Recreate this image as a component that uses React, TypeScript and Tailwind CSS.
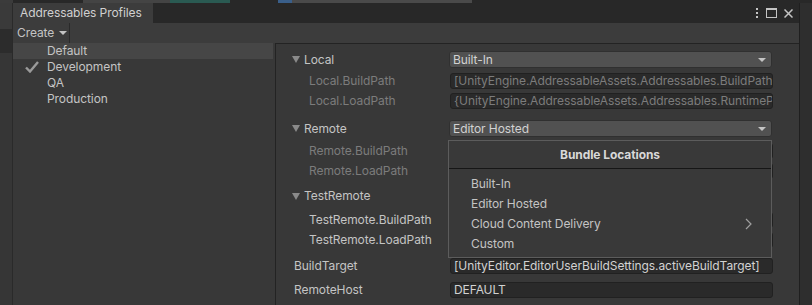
import React from 'react';

const FoldArrow = () => (
  <svg width="8" height="7" viewBox="0 0 8 7" className="shrink-0">
    <path d="M0 0H8L4 7Z" fill="#8a8a8a" />
  </svg>
);

const DropArrow = () => (
  <svg width="8" height="4" viewBox="0 0 8 4" className="shrink-0">
    <path d="M0 0H8L4 4Z" fill="#c4c4c4" />
  </svg>
);

const Dropdown = ({ value }: { value: string }) => (
  <div className="w-[323px] h-[17px] flex items-center justify-between pl-[3px] pr-[5px] rounded-[3px] bg-[#515151] border border-[#303030] text-[#d2d2d2]">
    <span className="leading-none">{value}</span>
    <DropArrow />
  </div>
);

const Field = ({ value, dim }: { value?: string; dim?: boolean }) => (
  <div
    className={
      dim
        ? 'w-[323px] h-[16px] flex items-center pl-[3px] rounded-[3px] bg-[#2a2a2a] border border-[#212121] text-[#7c7c7c] overflow-hidden whitespace-nowrap'
        : 'w-[323px] h-[16px] flex items-center pl-[3px] rounded-[3px] bg-[#2a2a2a] border border-[#212121] text-[#d2d2d2] overflow-hidden whitespace-nowrap'
    }
  >
    {value && <span className="leading-none">{value}</span>}
  </div>
);

export default function App() {
  return (
    <div className="w-[812px] h-[305px] overflow-hidden bg-[#282828] font-['Inter',sans-serif] text-[12px] tracking-[-0.08px] text-[#c4c4c4] flex flex-col">
      {/* sliver of the window above */}
      <div className="h-[3px] flex shrink-0">
        <div className="w-[13px] bg-[#3b3b3b]" />
        <div className="w-[70px] bg-[#282828]" />
        <div className="w-[87px] bg-[#444444]" />
        <div className="w-[60px] bg-[#2a5a52]" />
        <div className="w-[48px] bg-[#282828]" />
        <div className="w-[14px] bg-[#3a5f8a]" />
        <div className="w-[180px] bg-[#4a4a4a]" />
        <div className="flex-1 bg-[#282828]" />
      </div>

      <div className="flex flex-1 min-h-0">
        {/* left neighbour panel */}
        <div className="w-[13px] flex flex-col border-r border-[#2a2a2a]">
          <div className="h-[26px] bg-[#3a3a3a]" />
          <div className="h-[24px] bg-[#2c2c2c]" />
          <div className="flex-1 bg-[#363636]" />
        </div>

        {/* window */}
        <div className="w-[786px] flex flex-col bg-[#383838]">
          {/* tab bar */}
          <div className="h-[20px] flex bg-[#282828] shrink-0">
            <div className="w-[140px] bg-[#3c3c3c] flex items-center pl-[7px] text-[#d0d0d0]">
              Addressables Profiles
            </div>
            <div className="flex-1" />
            <div className="flex items-center gap-[7px] pr-[6px] text-[#c4c4c4]">
              <svg width="4" height="10" viewBox="0 0 4 10">
                <rect x="1" y="0" width="2" height="2" fill="#c4c4c4" />
                <rect x="1" y="4" width="2" height="2" fill="#c4c4c4" />
                <rect x="1" y="8" width="2" height="2" fill="#c4c4c4" />
              </svg>
              <svg width="11" height="10" viewBox="0 0 11 10">
                <rect x="0.5" y="0.5" width="10" height="9" fill="none" stroke="#c4c4c4" />
                <rect x="0" y="0" width="11" height="2" fill="#c4c4c4" />
              </svg>
              <svg width="9" height="9" viewBox="0 0 9 9">
                <path d="M0.5 0.5L8.5 8.5M8.5 0.5L0.5 8.5" stroke="#c4c4c4" strokeWidth="1.5" />
              </svg>
            </div>
          </div>

          {/* toolbar */}
          <div className="h-[20px] flex bg-[#3c3c3c] shrink-0">
            <div className="w-[57px] flex items-center gap-[5px] pl-[4px] border-r border-[#2a2a2a]">
              <span>Create</span>
              <DropArrow />
            </div>
          </div>

          {/* body */}
          <div className="flex flex-1 min-h-0">
            {/* profile list */}
            <div className="w-[262px] flex flex-col">
              <div className="w-[260px] h-[16px] flex items-center pl-[34px] bg-[#464646]">Default</div>
              <div className="h-[16px] flex items-center">
                <div className="w-[34px] flex justify-center pl-[4px]">
                  <svg width="14" height="12" viewBox="0 0 14 12">
                    <path d="M1 6.5L5 10.5L13 1" fill="none" stroke="#9a9a9a" strokeWidth="2.4" />
                  </svg>
                </div>
                <span>Development</span>
              </div>
              <div className="h-[16px] flex items-center pl-[34px]">QA</div>
              <div className="h-[16px] flex items-center pl-[34px]">Production</div>
            </div>

            {/* profile values */}
            <div className="flex-1 relative border-l border-t border-[#232323] flex flex-col">
              <div className="mt-[7px] h-[17px] flex items-center">
                <div className="w-[173px] flex items-center gap-[4px] pl-[16px]">
                  <FoldArrow />
                  <span>Local</span>
                </div>
                <Dropdown value="Built-In" />
              </div>
              <div className="mt-[5px] h-[16px] flex items-center">
                <div className="w-[174px] pl-[33px] text-[#7c7c7c]">Local.BuildPath</div>
                <Field dim value="[UnityEngine.AddressableAssets.Addressables.BuildPath]" />
              </div>
              <div className="mt-[4px] h-[16px] flex items-center">
                <div className="w-[174px] pl-[33px] text-[#7c7c7c]">Local.LoadPath</div>
                <Field dim value="{UnityEngine.AddressableAssets.Addressables.RuntimePath}" />
              </div>
              <div className="mt-[11px] h-[17px] flex items-center">
                <div className="w-[173px] flex items-center gap-[4px] pl-[16px]">
                  <FoldArrow />
                  <span>Remote</span>
                </div>
                <Dropdown value="Editor Hosted" />
              </div>
              <div className="mt-[6px] h-[16px] flex items-center">
                <div className="w-[174px] pl-[33px] text-[#7c7c7c]">Remote.BuildPath</div>
                <Field dim />
              </div>
              <div className="mt-[4px] h-[16px] flex items-center">
                <div className="w-[174px] pl-[33px] text-[#7c7c7c]">Remote.LoadPath</div>
                <Field dim />
              </div>
              <div className="mt-[9px] h-[16px] flex items-center">
                <div className="w-[173px] flex items-center gap-[4px] pl-[16px]">
                  <FoldArrow />
                  <span>TestRemote</span>
                </div>
              </div>
              <div className="mt-[8px] h-[16px] flex items-center">
                <div className="w-[174px] pl-[33px]">TestRemote.BuildPath</div>
                <Field />
              </div>
              <div className="mt-[4px] h-[16px] flex items-center">
                <div className="w-[174px] pl-[33px]">TestRemote.LoadPath</div>
                <Field />
              </div>
              <div className="mt-[10px] h-[16px] flex items-center">
                <div className="w-[174px] pl-[18px]">BuildTarget</div>
                <Field value="[UnityEditor.EditorUserBuildSettings.activeBuildTarget]" />
              </div>
              <div className="mt-[8px] h-[16px] flex items-center">
                <div className="w-[174px] pl-[18px]">RemoteHost</div>
                <Field value="DEFAULT" />
              </div>

              {/* Bundle Locations popup */}
              <div className="absolute left-[172px] top-[96px] w-[324px] h-[118px] bg-[#393939] border border-[#5c5c5c] flex flex-col">
                <div className="h-[28px] flex items-center justify-center font-bold text-[#d8d8d8] border-b border-[#161616] shrink-0">
                  Bundle Locations
                </div>
                <div className="pt-[5px] flex flex-col">
                  <div className="h-[20px] flex items-center pl-[22px]">Built-In</div>
                  <div className="h-[20px] flex items-center pl-[22px]">Editor Hosted</div>
                  <div className="h-[20px] flex items-center justify-between pl-[22px] pr-[19px]">
                    <span>Cloud Content Delivery</span>
                    <svg width="7" height="12" viewBox="0 0 7 12">
                      <path d="M1 1L6 6L1 11" fill="none" stroke="#a0a0a0" strokeWidth="1.2" />
                    </svg>
                  </div>
                  <div className="h-[20px] flex items-center pl-[22px]">Custom</div>
                </div>
              </div>
            </div>
          </div>
        </div>

        {/* right neighbour */}
        <div className="flex-1 bg-[#2e2e2e] border-l border-[#1f1f1f]" />
      </div>
    </div>
  );
}
